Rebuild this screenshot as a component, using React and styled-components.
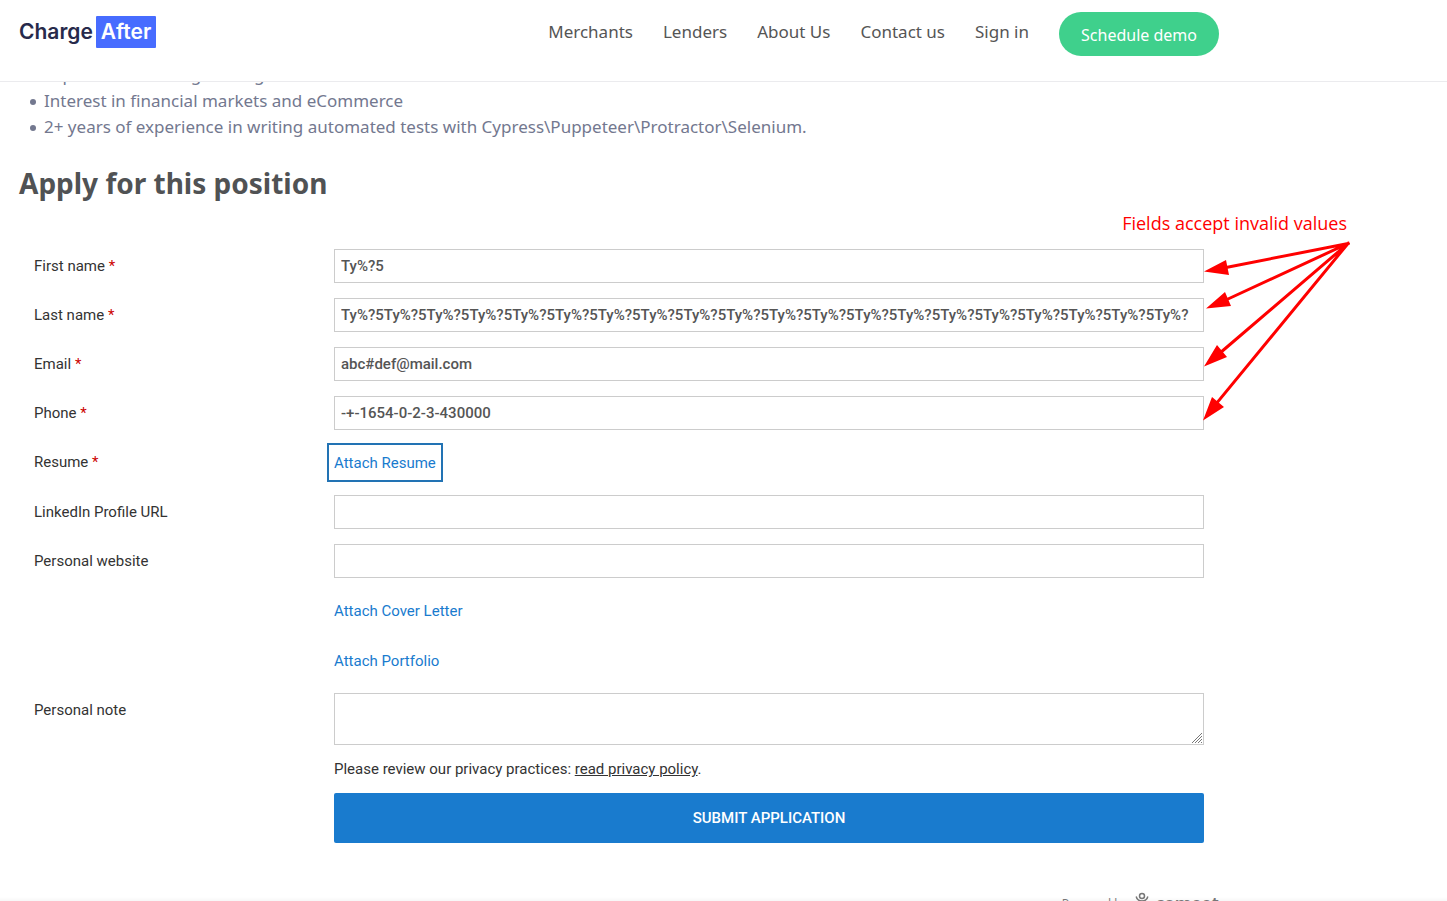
import React from "react";
import styled, { createGlobalStyle, css } from "styled-components";

const GlobalStyle = createGlobalStyle`
  *, *::before, *::after { box-sizing: border-box; }
  body {
    margin: 0;
    background: #fff;
    font-family: "Noto Sans", "Open Sans", sans-serif;
  }
`;

const Page = styled.div`
  display: flex;
  flex-direction: column;
  height: 100vh;
  overflow: hidden;
  background: linear-gradient(to top, #f7f7f7, #fff 4px);
`;

const Header = styled.header`
  flex: none;
  position: relative;
  z-index: 1;
  height: 82px;
  padding: 0 19px;
  background: #fff;
  border-bottom: 1px solid #ebebee;
`;

const HeaderInner = styled.div`
  display: flex;
  justify-content: space-between;
  align-items: flex-start;
  max-width: 1200px;
  padding-top: 12px;
`;

const Logo = styled.a`
  display: flex;
  align-items: center;
  gap: 3px;
  margin-top: 4px;
  color: #272a4b;
  font: 600 21px/32px Inter, sans-serif;
  text-decoration: none;
`;

const LogoMark = styled.span`
  padding: 0 5px;
  border-radius: 1px;
  background: #476cff;
  color: #fff;
`;

const Nav = styled.nav`
  display: flex;
  align-items: flex-start;
  gap: 30px;
`;

const NavLink = styled.a`
  color: #555;
  font-size: 17px;
  line-height: 40px;
  text-decoration: none;
`;

const DemoButton = styled.button`
  width: 160px;
  height: 44px;
  padding: 2px 0 0;
  border: 0;
  border-radius: 22px;
  background: #3fd08c;
  color: #fff;
  font: 16px/22px "Noto Sans", sans-serif;
`;

const Main = styled.main`
  flex: 1;
  min-height: 0;
  padding: 0 19px;
`;

const Content = styled.div`
  position: relative;
  max-width: 1200px;
`;

const Requirements = styled.ul`
  margin: -20px 0 0;
  padding: 0;
  list-style: none;
  color: #73788f;
  font-size: 17px;
  line-height: 26px;
`;

const Requirement = styled.li`
  display: flex;
  align-items: center;

  &::before {
    content: "";
    flex: none;
    width: 6px;
    height: 6px;
    margin: 2px 8px 0 11px;
    border-radius: 50%;
    background: currentColor;
  }
`;

const Title = styled.h2`
  margin: 23px 0 46px;
  color: #505254;
  font-size: 28px;
  font-weight: 700;
  line-height: 40px;
`;

const Form = styled.form`
  display: flex;
  flex-direction: column;
  gap: 15px;
  padding: 0 15px;
  color: #333;
  font: 15px/18px Roboto, sans-serif;
`;

const Row = styled.div`
  display: grid;
  grid-template-columns: 300px 1fr;
  align-items: start;
`;

const Label = styled.label`
  line-height: 34px;
`;

const Required = styled.span`
  color: #c00;
`;

const fieldStyle = css`
  display: block;
  width: 100%;
  padding: 0 6px;
  border: 1px solid #ccc;
  border-radius: 0;
  background: #fff;
  color: #555;
  font: 500 15px/18px Roboto, sans-serif;
  outline: none;
`;

const TextInput = styled.input`
  ${fieldStyle}
  height: 34px;
`;

const NoteBox = styled.div`
  position: relative;
`;

const TextArea = styled.textarea`
  ${fieldStyle}
  height: 52px;
  resize: none;
`;

const Grip = styled.svg`
  position: absolute;
  right: 1px;
  bottom: 1px;
  width: 12px;
  height: 12px;
  pointer-events: none;
`;

const AttachCell = styled.div`
  grid-column: 2;
  display: flex;
  align-items: center;
  height: 35px;
`;

const AttachButton = styled.button`
  height: 25px;
  padding: 2px 0 0;
  border: 0;
  background: none;
  color: #197bce;
  font: 15px/23px Roboto, sans-serif;
  outline: ${(p) => (p.$active ? "2px solid #2273b4" : "none")};
  outline-offset: 5px;
`;

const Privacy = styled.p`
  grid-column: 2;
  margin: 0;
`;

const PrivacyLink = styled.a`
  color: inherit;
  text-decoration: underline;
`;

const Submit = styled.button`
  grid-column: 2;
  height: 50px;
  border: 0;
  border-radius: 2px;
  background: #197bce;
  color: #fff;
  font: 500 15px/18px Roboto, sans-serif;
`;

const Powered = styled.div`
  display: flex;
  justify-content: flex-end;
  align-items: center;
  margin-top: 47px;
  color: #777;
  font: 12px/28px "Open Sans", sans-serif;
`;

const PoweredIcon = styled.svg`
  width: 14px;
  height: 24px;
  margin: 0 7px;
`;

const PoweredName = styled.a`
  color: #777;
  font-size: 17px;
  font-weight: 700;
  text-decoration: none;
`;

const Callout = styled.div`
  position: absolute;
  top: 148px;
  right: -132px;
  width: 250px;
`;

const CalloutText = styled.p`
  margin: 0 4px 0 0;
  color: #f00;
  font-family: "Open Sans", sans-serif;
  font-size: 18px;
  line-height: 26px;
  text-align: right;
  white-space: nowrap;
`;

const Arrows = styled.svg`
  display: block;
  margin-left: auto;
  width: 150px;
  height: 190px;
  pointer-events: none;
`;

const navItems = ["Merchants", "Lenders", "About Us", "Contact us", "Sign in"];

function Field({ id, label, required, type = "text", value }) {
  return (
    <Row>
      <Label htmlFor={id}>
        {label} {required && <Required>*</Required>}
      </Label>
      <TextInput id={id} type={type} defaultValue={value} />
    </Row>
  );
}

export default function App() {
  return (
    <Page>
      <GlobalStyle />
      <Header>
        <HeaderInner>
          <Logo href="#">
            Charge<LogoMark>After</LogoMark>
          </Logo>
          <Nav>
            {navItems.map((item) => (
              <NavLink href="#" key={item}>{item}</NavLink>
            ))}
            <DemoButton type="button">Schedule demo</DemoButton>
          </Nav>
        </HeaderInner>
      </Header>
      <Main>
        <Content>
          <Requirements>
            <Requirement>Experience working with agile</Requirement>
            <Requirement>Interest in financial markets and eCommerce</Requirement>
            <Requirement>2+ years of experience in writing automated tests with Cypress\Puppeteer\Protractor\Selenium.</Requirement>
          </Requirements>
          <Title>Apply for this position</Title>
          <Form noValidate onSubmit={(e) => e.preventDefault()}>
            <Field id="first" label="First name" required value="Ty%?5" />
            <Field id="last" label="Last name" required value={"Ty%?5".repeat(19) + "Ty%?"} />
            <Field id="email" label="Email" required type="email" value="abc#def@mail.com" />
            <Field id="phone" label="Phone" required type="tel" value="-+-1654-0-2-3-430000" />
            <Row>
              <Label htmlFor="resume">
                Resume <Required>*</Required>
              </Label>
              <AttachCell>
                <AttachButton id="resume" type="button" $active>Attach Resume</AttachButton>
              </AttachCell>
            </Row>
            <Field id="linkedin" label="LinkedIn Profile URL" type="url" />
            <Field id="website" label="Personal website" type="url" />
            <Row>
              <AttachCell>
                <AttachButton type="button">Attach Cover Letter</AttachButton>
              </AttachCell>
            </Row>
            <Row>
              <AttachCell>
                <AttachButton type="button">Attach Portfolio</AttachButton>
              </AttachCell>
            </Row>
            <Row>
              <Label htmlFor="note">Personal note</Label>
              <NoteBox>
                <TextArea id="note" />
                <Grip viewBox="0 0 12 12" stroke="#777" fill="none" aria-hidden="true">
                  <path d="M1 11 11 1M4 11l7-7M7 11l4-4M10 11l1-1" />
                </Grip>
              </NoteBox>
            </Row>
            <Row>
              <Privacy>
                Please review our privacy practices: <PrivacyLink href="#">read privacy policy</PrivacyLink>.
              </Privacy>
            </Row>
            <Row>
              <Submit type="submit">SUBMIT APPLICATION</Submit>
            </Row>
          </Form>
          <Powered>
            Powered by
            <PoweredIcon viewBox="0 3 14 24" fill="none" stroke="#777" strokeWidth="1.5" aria-hidden="true">
              <circle cx="7" cy="7" r="2.500" />
              <path d="M1.200 7.500c.6 3 2.800 4.500 5.800 4.500s5.200-1.500 5.800-4.500M3 22c0-5 1-7 4-10 3 3 4 5 4 10" />
            </PoweredIcon>
            <PoweredName href="#">comeet</PoweredName>
          </Powered>
          <Callout>
            <CalloutText>Fields accept invalid values</CalloutText>
            <Arrows viewBox="1201 236 150 190" aria-hidden="true">
              <g stroke="#f00" strokeWidth="3" strokeLinecap="square">
                <path d="M1348 243.5 1226 267.5M1348 243.5 1228 299M1348 243.5 1220 353M1348 243.5 1216 404" />
              </g>
              <path
                fill="#f00"
                d="M1204 271.500 1226 260 1229 275ZM1206 308.500 1225 292 1231 306ZM1204 366.500 1217 345 1227 357ZM1203 420.500 1212 397 1224 407Z"
              />
            </Arrows>
          </Callout>
        </Content>
      </Main>
    </Page>
  );
}
